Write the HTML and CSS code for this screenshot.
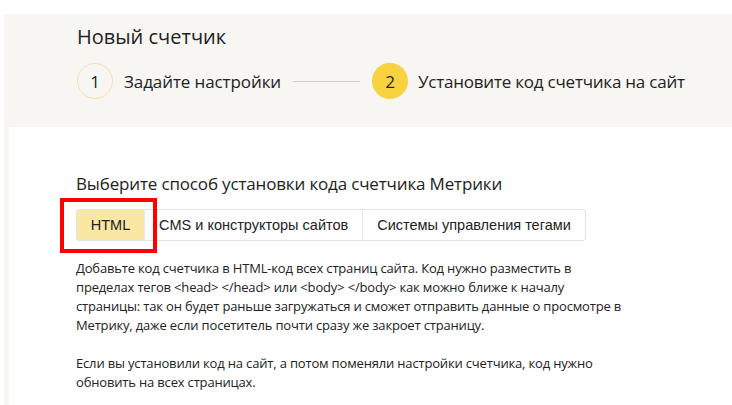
FILE: index.html
```html
<!DOCTYPE html>
<html lang="ru">
<head>
<meta charset="utf-8">
<title>Новый счетчик</title>
<link rel="stylesheet" href="styles.css">
</head>
<body>
<div class="page">
  <header class="header">
    <h1 class="title">Новый счетчик</h1>
    <div class="steps">
      <div class="step">
        <span class="step-num step-num--done">1</span>
        <span class="step-label">Задайте настройки</span>
      </div>
      <span class="step-line"></span>
      <div class="step">
        <span class="step-num step-num--active">2</span>
        <span class="step-label step-label--current">Установите код счетчика на сайт</span>
      </div>
    </div>
  </header>
  <main class="card">
    <h2 class="section-title">Выберите способ установки кода счетчика Метрики</h2>
    <div class="tabs-wrap">
      <div class="tabs">
        <button class="tab tab--active">HTML</button>
        <button class="tab">CMS и конструкторы сайтов</button>
        <button class="tab">Системы управления тегами</button>
      </div>
      <span class="highlight"></span>
    </div>
    <p class="text">Добавьте код счетчика в HTML-код всех страниц сайта. Код нужно разместить в пределах тегов &lt;head&gt; &lt;/head&gt; или &lt;body&gt; &lt;/body&gt; как можно ближе к началу страницы: так он будет раньше загружаться и сможет отправить данные о просмотре в Метрику, даже если посетитель почти сразу же закроет страницу.</p>
    <p class="text">Если вы установили код на сайт, а потом поменяли настройки счетчика, код нужно обновить на всех страницах.</p>
  </main>
</div>
</body>
</html>
```
FILE: styles.css
```css
* { box-sizing: border-box; }
html, body { margin: 0; padding: 0; background: #fff; }
body {
  font-family: "Open Sans", "Noto Sans", sans-serif;
  color: #222;
  overflow: hidden;
}
.page {
  margin: 14px 0 0 4px;
  background: #f7f6f3;
}
.header {
  padding: 10px 0 0 73px;
  height: 113px;
}
.title {
  margin: 0;
  font-size: 20px;
  font-weight: 400;
  line-height: 26px;
}
.steps {
  display: flex;
  align-items: center;
  margin-top: 13px;
}
.step {
  display: flex;
  align-items: center;
}
.step-num {
  width: 36px;
  height: 36px;
  border-radius: 50%;
  display: flex;
  align-items: center;
  justify-content: center;
  font-size: 17px;
  margin-right: 11px;
}
.step-num--done {
  border: 1px solid #f4e2a2;
}
.step-num--active {
  background: #f9d240;
  margin-right: 10px;
}
.step-label {
  font-size: 17px;
  letter-spacing: -0.1px;
}
.step-label--current {
  letter-spacing: -0.22px;
}
.step-line {
  width: 67px;
  height: 1px;
  background: #cfcecb;
  margin: 0 12px 0 12px;
}
.card {
  margin-left: 5px;
  background: #fff;
  padding: 45px 0 30px 67px;
}
.section-title {
  margin: 0;
  font-size: 17px;
  font-weight: 400;
  line-height: 24px;
  letter-spacing: -0.16px;
}
.tabs-wrap {
  position: relative;
  margin-top: 13px;
  display: inline-block;
}
.tabs {
  display: flex;
  border: 1px solid #e3e3e3;
  border-radius: 3px;
  height: 32px;
}
.tab {
  font-family: "Liberation Sans", Arial, sans-serif;
  font-size: 14.5px;
  color: #222;
  background: transparent;
  border: 0;
  border-left: 1px solid #e9e9e9;
  padding: 0 14px;
  height: 30px;
  cursor: pointer;
}
.tab:first-child { border-left: 0; }
.tab--active {
  background: #fae7a3;
  width: 67px;
  padding: 0;
  border-radius: 2px 0 0 2px;
}
.highlight {
  position: absolute;
  left: -16px;
  top: -11px;
  width: 97px;
  height: 55px;
  border: 4px solid #f00;
}
.text {
  margin: 18px 0 0;
  font-size: 13px;
  line-height: 19px;
  width: 546px;
  letter-spacing: -0.17px;
}
.text + .text { margin-top: 19px; }
```
